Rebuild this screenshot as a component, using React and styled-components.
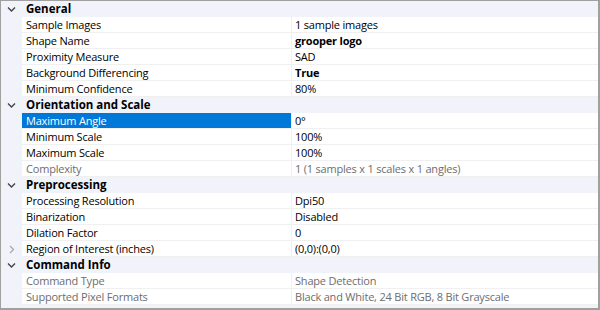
import React from "react";
import styled, { createGlobalStyle } from "styled-components";

const Global = createGlobalStyle`
  html, body { margin: 0; padding: 0; background: #fff; }
  body { font-family: "Open Sans", "Noto Sans", sans-serif; }
`;

const Grid = styled.div`
  box-sizing: border-box;
  width: 600px;
  height: 310px;
  border: 1px solid #a0a0a0;
  border-right-width: 2px;
  border-bottom-width: 2px;
  background: #f0f3f9;
  display: flex;
  flex-direction: column;
  overflow: hidden;
`;

const Row = styled.div`
  display: grid;
  grid-template-columns: 21px 270px 1fr;
  height: 16px;
  box-sizing: border-box;
  font-size: 11px;
  letter-spacing: -0.2px;
  line-height: 16px;
`;

const Margin = styled.div`
  display: flex;
  align-items: center;
  justify-content: center;
  background: #f0f3f9;
`;

const HeaderRow = styled(Row)`
  background: #f0f3f9;
`;

const HeaderText = styled.div`
  grid-column: 2 / 4;
  padding-left: 4px;
  font-size: 11.5px;
  letter-spacing: 0;
  font-weight: 700;
  color: #000;
  white-space: nowrap;
`;

const Label = styled.div`
  padding-left: 4px;
  border-bottom: 1px solid #f0f0f0;
  border-right: 1px solid #f0f0f0;
  background: ${(p) => (p.$selected ? "#0078d7" : "#fff")};
  color: ${(p) => (p.$selected ? "#fff" : p.$readonly ? "#6d6d6d" : "#000")};
  white-space: nowrap;
  overflow: hidden;
`;

const Value = styled.div`
  padding-left: 3px;
  border-bottom: 1px solid #f0f0f0;
  background: #fff;
  color: ${(p) => (p.$readonly ? "#6d6d6d" : "#000")};
  font-weight: ${(p) => (p.$bold ? 700 : 400)};
  white-space: nowrap;
  overflow: hidden;
`;

const Chevron = ({ open, light }) => (
  <svg width="9" height="9" viewBox="0 0 9 9">
    {open ? (
      <path d="M1 2.5 L4.5 6 L8 2.5" fill="none" stroke={light ? "#a0a0a0" : "#404040"} strokeWidth="1.3" />
    ) : (
      <path d="M3 1 L6.5 4.5 L3 8" fill="none" stroke={light ? "#a8a8a8" : "#404040"} strokeWidth="1.3" />
    )}
  </svg>
);

const sections = [
  {
    title: "General",
    items: [
      { label: "Sample Images", value: "1 sample images" },
      { label: "Shape Name", value: "grooper logo", bold: true },
      { label: "Proximity Measure", value: "SAD" },
      { label: "Background Differencing", value: "True", bold: true },
      { label: "Minimum Confidence", value: "80%" },
    ],
  },
  {
    title: "Orientation and Scale",
    items: [
      { label: "Maximum Angle", value: "0°", selected: true },
      { label: "Minimum Scale", value: "100%" },
      { label: "Maximum Scale", value: "100%" },
      { label: "Complexity", value: "1 (1 samples x 1 scales x 1 angles)", readonly: true },
    ],
  },
  {
    title: "Preprocessing",
    items: [
      { label: "Processing Resolution", value: "Dpi50" },
      { label: "Binarization", value: "Disabled" },
      { label: "Dilation Factor", value: "0" },
      { label: "Region of Interest (inches)", value: "(0,0):(0,0)", expandable: true },
    ],
  },
  {
    title: "Command Info",
    items: [
      { label: "Command Type", value: "Shape Detection", readonly: true },
      { label: "Supported Pixel Formats", value: "Black and White, 24 Bit RGB, 8 Bit Grayscale", readonly: true },
    ],
  },
];

export default function App() {
  return (
    <>
      <Global />
      <Grid>
        {sections.map((s) => (
          <React.Fragment key={s.title}>
            <HeaderRow>
              <Margin>
                <Chevron open />
              </Margin>
              <HeaderText>{s.title}</HeaderText>
            </HeaderRow>
            {s.items.map((it) => (
              <Row key={it.label}>
                <Margin>{it.expandable ? <Chevron light /> : null}</Margin>
                <Label $selected={it.selected} $readonly={it.readonly}>
                  {it.label}
                </Label>
                <Value $bold={it.bold} $readonly={it.readonly}>
                  {it.value}
                </Value>
              </Row>
            ))}
          </React.Fragment>
        ))}
      </Grid>
    </>
  );
}
